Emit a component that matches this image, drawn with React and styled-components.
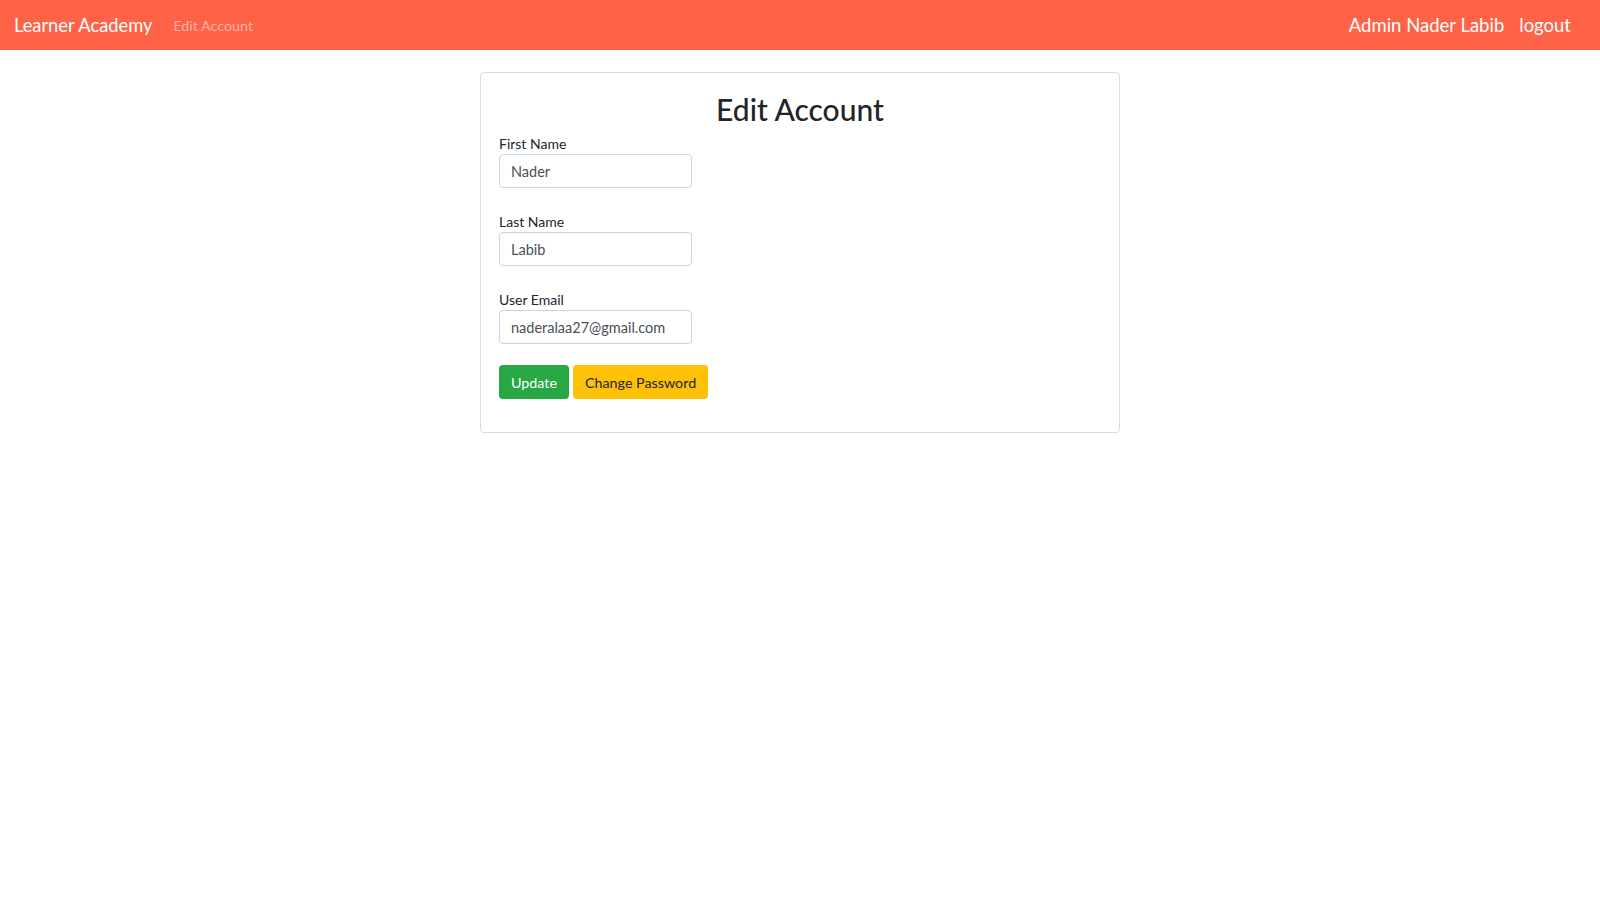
import React from "react";
import styled, { createGlobalStyle } from "styled-components";

const GlobalStyle = createGlobalStyle`
  body {
    margin: 0;
    background: #fff;
    font-family: Lato, "Open Sans", "Liberation Sans", sans-serif;
    color: #212529;
  }
`;

function App() {
  return (
    <>
      <GlobalStyle />
      <NavBar>
        <Brand>Learner Academy</Brand>
        <NavLink>Edit Account</NavLink>
        <NavRight>
          <NavItem>Admin Nader Labib</NavItem>
          <NavItem>logout</NavItem>
        </NavRight>
      </NavBar>
      <Card>
        <Title>Edit Account</Title>
        <Form>
          <Field>
            <Label>First Name</Label>
            <Input defaultValue="Nader" />
          </Field>
          <Field>
            <Label>Last Name</Label>
            <Input defaultValue="Labib" />
          </Field>
          <Field>
            <Label>User Email</Label>
            <Input defaultValue="naderalaa27@gmail.com" />
          </Field>
        </Form>
        <Buttons>
          <Button bg="#28a745" fg="#fff">Update</Button>
          <Button bg="#ffc107" fg="#212529">Change Password</Button>
        </Buttons>
      </Card>
    </>
  );
}

const NavBar = styled.nav`
  display: flex;
  align-items: center;
  height: 50px;
  padding: 0 29px 0 14px;
  background: #ff6347;
`;

const Brand = styled.div`
  color: #fff;
  font-size: 18.3px;
  margin-right: 21px;
`;

const NavLink = styled.div`
  color: rgba(255, 255, 255, 0.5);
  font-size: 14.3px;
`;

const NavRight = styled.div`
  display: flex;
  gap: 15px;
  margin-left: auto;
`;

const NavItem = styled.div`
  color: #fff;
  font-size: 18.5px;
`;

const Card = styled.div`
  width: 640px;
  box-sizing: border-box;
  margin: 22px auto 0;
  padding: 17px 18px 33px;
  border: 1px solid #dcdcdc;
  border-radius: 4px;
  display: flex;
  flex-direction: column;
`;

const Title = styled.h2`
  margin: 0 0 6px;
  text-align: center;
  font-size: 30px;
  font-weight: 500;
  line-height: 38px;
  color: #212529;
`;

const Form = styled.div`
  display: flex;
  flex-direction: column;
  gap: 24px;
  margin-bottom: 21px;
`;

const Field = styled.div`
  display: flex;
  flex-direction: column;
`;

const Label = styled.label`
  font-size: 14px;
  line-height: 20px;
  color: #212529;
`;

const Input = styled.input`
  width: 193px;
  height: 34px;
  box-sizing: border-box;
  padding: 0 11px;
  border: 1px solid #ced4da;
  border-radius: 4px;
  font-family: inherit;
  font-size: 14.5px;
  color: #495057;
  outline: none;
`;

const Buttons = styled.div`
  display: flex;
  gap: 4px;
`;

const Button = styled.button`
  height: 34px;
  padding: 0 12px;
  border: none;
  border-radius: 4px;
  background: ${(p) => p.bg};
  color: ${(p) => p.fg};
  font-family: inherit;
  font-size: 14.3px;
`;

export default App;
